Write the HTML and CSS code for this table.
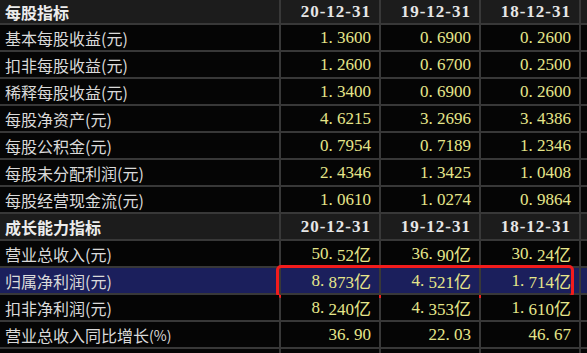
FILE: index.html
```html
<!DOCTYPE html>
<html lang="zh-CN">
<head>
<meta charset="utf-8">
<title>每股指标</title>
<link rel="stylesheet" href="styles.css">
</head>
<body>
<div class="table">
  <div class="row head">
    <div class="label">每股指标</div>
    <div class="val">20-12-31</div>
    <div class="val">19-12-31</div>
    <div class="val">18-12-31</div>
    <div class="pad"></div>
  </div>
  <div class="row">
    <div class="label">基本每股收益(元)</div>
    <div class="val">1<span class="dot">.</span>3600</div>
    <div class="val">0<span class="dot">.</span>6900</div>
    <div class="val">0<span class="dot">.</span>2600</div>
    <div class="pad"></div>
  </div>
  <div class="row">
    <div class="label">扣非每股收益(元)</div>
    <div class="val">1<span class="dot">.</span>2600</div>
    <div class="val">0<span class="dot">.</span>6700</div>
    <div class="val">0<span class="dot">.</span>2500</div>
    <div class="pad"></div>
  </div>
  <div class="row">
    <div class="label">稀释每股收益(元)</div>
    <div class="val">1<span class="dot">.</span>3400</div>
    <div class="val">0<span class="dot">.</span>6900</div>
    <div class="val">0<span class="dot">.</span>2600</div>
    <div class="pad"></div>
  </div>
  <div class="row">
    <div class="label">每股净资产(元)</div>
    <div class="val">4<span class="dot">.</span>6215</div>
    <div class="val">3<span class="dot">.</span>2696</div>
    <div class="val">3<span class="dot">.</span>4386</div>
    <div class="pad"></div>
  </div>
  <div class="row">
    <div class="label">每股公积金(元)</div>
    <div class="val">0<span class="dot">.</span>7954</div>
    <div class="val">0<span class="dot">.</span>7189</div>
    <div class="val">1<span class="dot">.</span>2346</div>
    <div class="pad"></div>
  </div>
  <div class="row">
    <div class="label">每股未分配利润(元)</div>
    <div class="val">2<span class="dot">.</span>4346</div>
    <div class="val">1<span class="dot">.</span>3425</div>
    <div class="val">1<span class="dot">.</span>0408</div>
    <div class="pad"></div>
  </div>
  <div class="row">
    <div class="label">每股经营现金流(元)</div>
    <div class="val">1<span class="dot">.</span>0610</div>
    <div class="val">1<span class="dot">.</span>0274</div>
    <div class="val">0<span class="dot">.</span>9864</div>
    <div class="pad"></div>
  </div>
  <div class="row head sub">
    <div class="label">成长能力指标</div>
    <div class="val">20-12-31</div>
    <div class="val">19-12-31</div>
    <div class="val">18-12-31</div>
    <div class="pad"></div>
  </div>
  <div class="row">
    <div class="label">营业总收入(元)</div>
    <div class="val">50<span class="dot">.</span>52亿</div>
    <div class="val">36<span class="dot">.</span>90亿</div>
    <div class="val">30<span class="dot">.</span>24亿</div>
    <div class="pad"></div>
  </div>
  <div class="row selected">
    <div class="label">归属净利润(元)</div>
    <div class="val">8<span class="dot">.</span>873亿</div>
    <div class="val">4<span class="dot">.</span>521亿</div>
    <div class="val">1<span class="dot">.</span>714亿</div>
    <div class="pad"></div>
    <div class="mark"></div>
  </div>
  <div class="row">
    <div class="label">扣非净利润(元)</div>
    <div class="val">8<span class="dot">.</span>240亿</div>
    <div class="val">4<span class="dot">.</span>353亿</div>
    <div class="val">1<span class="dot">.</span>610亿</div>
    <div class="pad"></div>
  </div>
  <div class="row">
    <div class="label">营业总收入同比增长<span class="pct">(%)</span></div>
    <div class="val">36<span class="dot">.</span>90</div>
    <div class="val">22<span class="dot">.</span>03</div>
    <div class="val">46<span class="dot">.</span>67</div>
    <div class="pad"></div>
  </div>
  <div class="row tail">
    <div class="label"></div>
    <div class="val"></div>
    <div class="val"></div>
    <div class="val"></div>
    <div class="pad"></div>
  </div>
</div>
</body>
</html>
```
FILE: styles.css
```css
html, body {
  margin: 0;
  padding: 0;
  background: #000;
}
body {
  width: 587px;
  height: 353px;
  overflow: hidden;
}
.table {
  display: flex;
  flex-direction: column;
  gap: 2px;
  background: #383838;
}
.row {
  position: relative;
  display: grid;
  grid-template-columns: 279px 98px 98px 98px 1fr;
  column-gap: 2px;
  height: 25px;
}
.row > div {
  background: #050505;
  display: flex;
  align-items: center;
  white-space: nowrap;
  overflow: hidden;
}
.row.head {
  height: 23px;
}
.row.head.sub {
  height: 25px;
}
.row.tail {
  height: 4px;
}
.row.head > div {
  background: #1c1c1c;
}
.row.selected > div {
  background: #1b1f5c;
}
.label {
  padding-left: 5px;
  font-family: "Noto Sans CJK SC", "Noto Sans", sans-serif;
  font-size: 16px;
  color: #dadada;
}
.head .label {
  font-weight: bold;
  color: #ececec;
}
.pct {
  font-size: 14px;
}
.val {
  justify-content: flex-end;
  padding-right: 8px;
  font-family: "Liberation Serif", "Noto Sans CJK SC", serif;
  font-size: 17px;
  color: #e6e68a;
}
.head .val {
  font-weight: bold;
  color: #e6e6e6;
  letter-spacing: 1px;
}
.dot {
  display: inline-block;
  width: 0.5em;
}
.row.selected > .mark {
  position: absolute;
  left: 276px;
  top: -3px;
  width: 298px;
  height: 33px;
  box-sizing: border-box;
  border: 3px solid #f21c1c;
  border-radius: 5px;
  background: transparent;
}
```
